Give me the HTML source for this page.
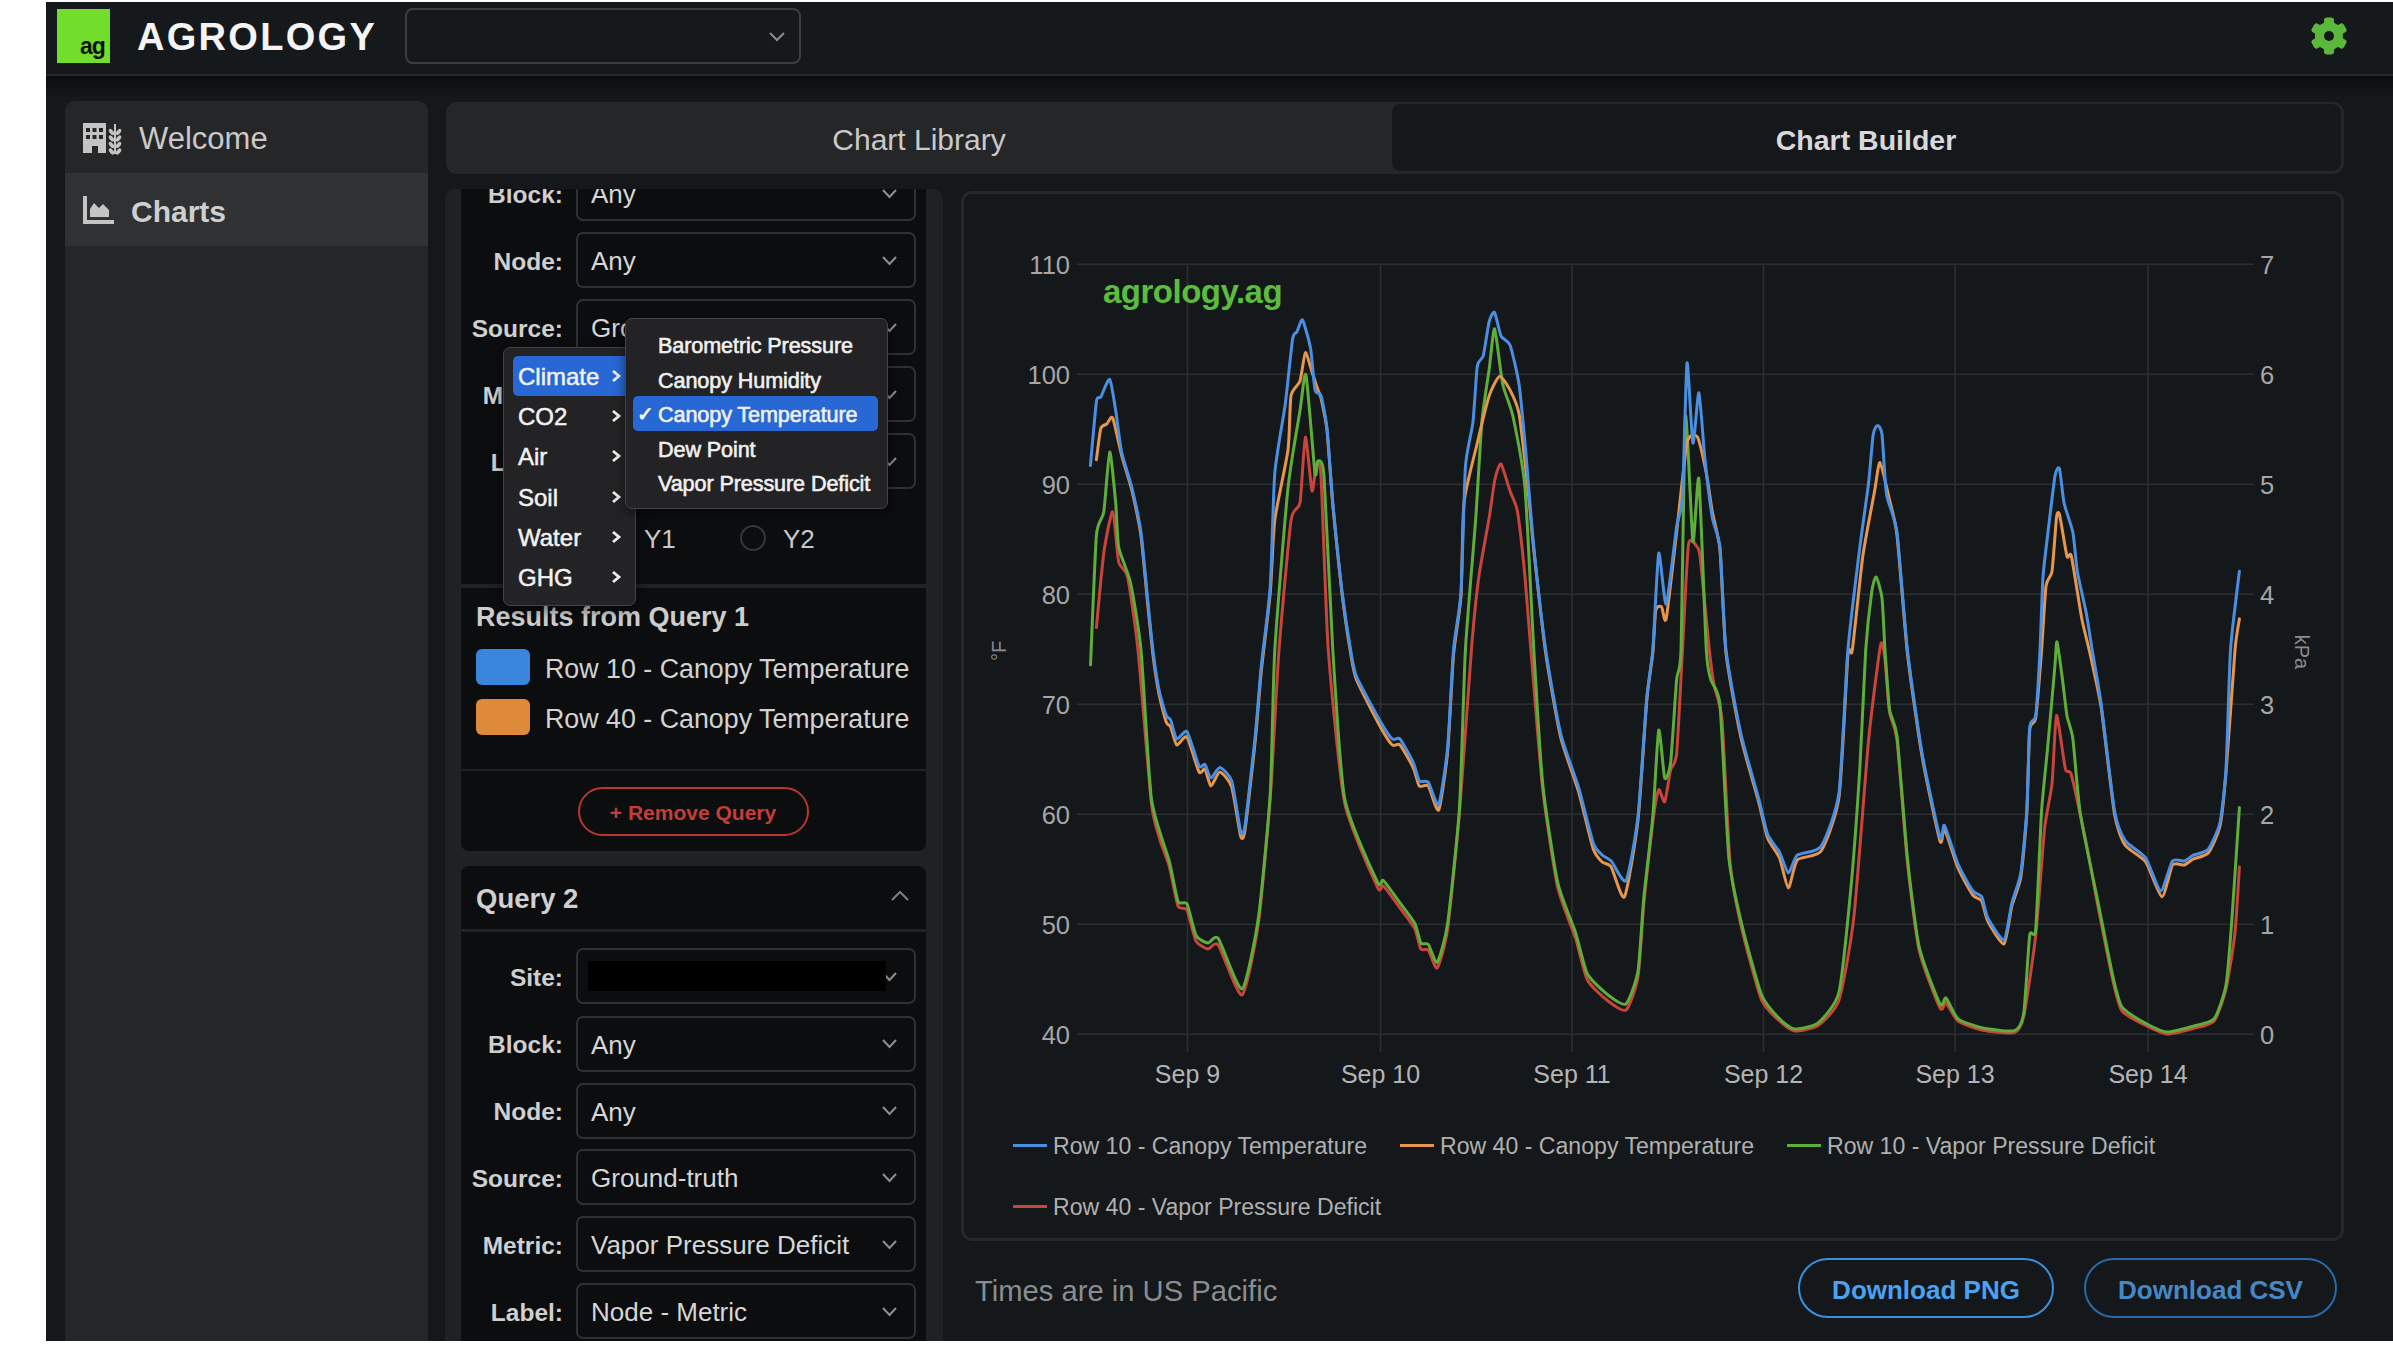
<!DOCTYPE html><html><head><meta charset="utf-8"><style>html,body{margin:0;padding:0;background:#fff;width:2393px;height:1345px;overflow:hidden;font-family:"Liberation Sans", sans-serif;}</style></head><body>
<div style="position:absolute;left:46px;top:2px;width:2347px;height:1339px;background:#15181b;overflow:hidden;"></div>
<div style="position:absolute;left:46px;top:2px;width:2347px;height:72px;background:#16191c;"></div>
<div style="position:absolute;left:46px;top:74px;width:2347px;height:2px;background:#26292c;"></div>
<div style="position:absolute;left:46px;top:76px;width:2347px;height:20px;background:linear-gradient(#0a0b0c,#15181b);"></div>
<div style="position:absolute;left:57px;top:9px;width:53px;height:54px;background:#72de2b;"></div>
<div style="position:absolute;left:80px;top:23px;height:46px;line-height:46px;font-size:23px;font-weight:700;color:#071204;white-space:nowrap;letter-spacing:-1px;">ag</div>
<div style="position:absolute;left:137px;top:-1px;height:76px;line-height:76px;font-size:38px;font-weight:700;color:#f4f4f4;white-space:nowrap;letter-spacing:2.3px;">AGROLOGY</div>
<div style="position:absolute;left:405px;top:8px;width:396px;height:56px;box-sizing:border-box;border:2px solid #3b3e41;border-radius:8px;"></div>
<svg style="position:absolute;left:768.0px;top:30.5px" width="18" height="11"><polyline points="2,2 9.0,9 16,2" fill="none" stroke="#8a8d90" stroke-width="2"/></svg>
<svg style="position:absolute;left:2309px;top:16px" width="40" height="40" viewBox="-20 -20 40 40"><rect x="-5" y="-18.5" width="10" height="9" rx="3" fill="#5cb83c" transform="rotate(0)"/><rect x="-5" y="-18.5" width="10" height="9" rx="3" fill="#5cb83c" transform="rotate(60)"/><rect x="-5" y="-18.5" width="10" height="9" rx="3" fill="#5cb83c" transform="rotate(120)"/><rect x="-5" y="-18.5" width="10" height="9" rx="3" fill="#5cb83c" transform="rotate(180)"/><rect x="-5" y="-18.5" width="10" height="9" rx="3" fill="#5cb83c" transform="rotate(240)"/><rect x="-5" y="-18.5" width="10" height="9" rx="3" fill="#5cb83c" transform="rotate(300)"/><circle r="14" fill="#5cb83c"/><circle r="5" fill="#16191c"/></svg>
<div style="position:absolute;left:65px;top:101px;width:363px;height:1240px;background:#252628;border-radius:10px 10px 0 0;"></div>
<div style="position:absolute;left:65px;top:173px;width:363px;height:73px;background:#303133;"></div>
<svg style="position:absolute;left:82px;top:121px" width="42" height="34" viewBox="0 0 42 34"><path d="M1 2 h23 v30 h-8 v-7 h-6 v7 h-9z" fill="#c4c4c4"/><rect x="4.0" y="7" width="4" height="4" fill="#252628"/><rect x="4.0" y="14" width="4" height="4" fill="#252628"/><rect x="10.5" y="7" width="4" height="4" fill="#252628"/><rect x="10.5" y="14" width="4" height="4" fill="#252628"/><rect x="17.0" y="7" width="4" height="4" fill="#252628"/><rect x="17.0" y="14" width="4" height="4" fill="#252628"/><rect x="32" y="3" width="2" height="30" fill="#c4c4c4"/><ellipse cx="29.5" cy="11.0" rx="1.9" ry="3.6" fill="#c4c4c4" transform="rotate(-40 29.5 11.0)"/><ellipse cx="36.5" cy="11.0" rx="1.9" ry="3.6" fill="#c4c4c4" transform="rotate(40 36.5 11.0)"/><ellipse cx="29.5" cy="17.5" rx="1.9" ry="3.6" fill="#c4c4c4" transform="rotate(-40 29.5 17.5)"/><ellipse cx="36.5" cy="17.5" rx="1.9" ry="3.6" fill="#c4c4c4" transform="rotate(40 36.5 17.5)"/><ellipse cx="29.5" cy="24.0" rx="1.9" ry="3.6" fill="#c4c4c4" transform="rotate(-40 29.5 24.0)"/><ellipse cx="36.5" cy="24.0" rx="1.9" ry="3.6" fill="#c4c4c4" transform="rotate(40 36.5 24.0)"/><ellipse cx="29.5" cy="30.5" rx="1.9" ry="3.6" fill="#c4c4c4" transform="rotate(-40 29.5 30.5)"/><ellipse cx="36.5" cy="30.5" rx="1.9" ry="3.6" fill="#c4c4c4" transform="rotate(40 36.5 30.5)"/></svg>
<div style="position:absolute;left:139px;top:108px;height:62px;line-height:62px;font-size:31px;font-weight:400;color:#c9c9c9;white-space:nowrap;">Welcome</div>
<svg style="position:absolute;left:82px;top:195px" width="34" height="30" viewBox="0 0 34 30"><path d="M1 1 h4 v24 h27 v4 h-31z" fill="#c4c4c4"/><path d="M8 22 v-8 l4 -6 l5 5 l4 -4 l6 6 v7z" fill="#c4c4c4"/></svg>
<div style="position:absolute;left:131px;top:181.5px;height:60px;line-height:60px;font-size:30px;font-weight:700;color:#cfcfcf;white-space:nowrap;">Charts</div>
<div style="position:absolute;left:446px;top:102px;width:1898px;height:72px;box-sizing:border-box;background:#252628;border:3px solid #24272a;border-radius:11px;"></div>
<div style="position:absolute;left:1390px;top:104px;width:951px;height:67px;box-sizing:border-box;background:#15181b;border-left:2px solid #25282b;border-radius:9px;"></div>
<div style="position:absolute;left:169px;width:1500px;text-align:center;top:110px;height:60px;line-height:60px;font-size:30px;font-weight:400;color:#c9c9c9;white-space:nowrap;">Chart Library</div>
<div style="position:absolute;left:1116px;width:1500px;text-align:center;top:111.5px;height:57.0px;line-height:57.0px;font-size:28.5px;font-weight:700;color:#d9d9d9;white-space:nowrap;">Chart Builder</div>
<div style="position:absolute;left:445px;top:189px;width:498px;height:1152px;overflow:hidden;border-radius:10px 10px 0 0;background:#1f2123;">
<div style="position:absolute;left:-445px;top:-189px;width:2393px;height:1345px;">
<div style="position:absolute;left:461px;top:150px;width:465px;height:434px;background:#0b0d0f;"></div>
<div style="position:absolute;left:461px;top:588px;width:465px;height:181px;background:#0b0d0f;"></div>
<div style="position:absolute;left:461px;top:771px;width:465px;height:80px;background:#0b0d0f;border-radius:0 0 8px 8px;"></div>
<div style="position:absolute;left:576px;top:165px;width:340px;height:56px;box-sizing:border-box;border:2px solid #2e3134;border-radius:7px;background:#0b0d0f;"></div>
<div style="position:absolute;left:591px;top:168.0px;height:52px;line-height:52px;font-size:26px;font-weight:400;color:#d6d6d6;white-space:nowrap;">Any</div>
<svg style="position:absolute;left:880.5px;top:187.5px" width="17" height="11"><polyline points="2,2 8.5,9 15,2" fill="none" stroke="#8c8f92" stroke-width="2"/></svg>
<div style="position:absolute;left:-937px;width:1500px;text-align:right;top:169.5px;height:49.0px;line-height:49.0px;font-size:24.5px;font-weight:700;color:#cfcfcf;white-space:nowrap;">Block:</div>
<div style="position:absolute;left:576px;top:232px;width:340px;height:56px;box-sizing:border-box;border:2px solid #2e3134;border-radius:7px;background:#0b0d0f;"></div>
<div style="position:absolute;left:591px;top:235.0px;height:52px;line-height:52px;font-size:26px;font-weight:400;color:#d6d6d6;white-space:nowrap;">Any</div>
<svg style="position:absolute;left:880.5px;top:254.5px" width="17" height="11"><polyline points="2,2 8.5,9 15,2" fill="none" stroke="#8c8f92" stroke-width="2"/></svg>
<div style="position:absolute;left:-937px;width:1500px;text-align:right;top:236.5px;height:49.0px;line-height:49.0px;font-size:24.5px;font-weight:700;color:#cfcfcf;white-space:nowrap;">Node:</div>
<div style="position:absolute;left:576px;top:299px;width:340px;height:56px;box-sizing:border-box;border:2px solid #2e3134;border-radius:7px;background:#0b0d0f;"></div>
<div style="position:absolute;left:591px;top:302.0px;height:52px;line-height:52px;font-size:26px;font-weight:400;color:#d6d6d6;white-space:nowrap;">Ground-truth</div>
<svg style="position:absolute;left:880.5px;top:321.5px" width="17" height="11"><polyline points="2,2 8.5,9 15,2" fill="none" stroke="#8c8f92" stroke-width="2"/></svg>
<div style="position:absolute;left:-937px;width:1500px;text-align:right;top:303.5px;height:49.0px;line-height:49.0px;font-size:24.5px;font-weight:700;color:#cfcfcf;white-space:nowrap;">Source:</div>
<div style="position:absolute;left:576px;top:366px;width:340px;height:56px;box-sizing:border-box;border:2px solid #2e3134;border-radius:7px;background:#0b0d0f;"></div>
<div style="position:absolute;left:591px;top:369.0px;height:52px;line-height:52px;font-size:26px;font-weight:400;color:#d6d6d6;white-space:nowrap;">Canopy Temperature</div>
<svg style="position:absolute;left:880.5px;top:388.5px" width="17" height="11"><polyline points="2,2 8.5,9 15,2" fill="none" stroke="#8c8f92" stroke-width="2"/></svg>
<div style="position:absolute;left:-937px;width:1500px;text-align:right;top:370.5px;height:49.0px;line-height:49.0px;font-size:24.5px;font-weight:700;color:#cfcfcf;white-space:nowrap;">Metric:</div>
<div style="position:absolute;left:576px;top:433px;width:340px;height:56px;box-sizing:border-box;border:2px solid #2e3134;border-radius:7px;background:#0b0d0f;"></div>
<div style="position:absolute;left:591px;top:436.0px;height:52px;line-height:52px;font-size:26px;font-weight:400;color:#d6d6d6;white-space:nowrap;">Node - Metric</div>
<svg style="position:absolute;left:880.5px;top:455.5px" width="17" height="11"><polyline points="2,2 8.5,9 15,2" fill="none" stroke="#8c8f92" stroke-width="2"/></svg>
<div style="position:absolute;left:-937px;width:1500px;text-align:right;top:437.5px;height:49.0px;line-height:49.0px;font-size:24.5px;font-weight:700;color:#cfcfcf;white-space:nowrap;">Label:</div>
<div style="position:absolute;left:596px;top:525px;width:22px;height:22px;border-radius:50%;box-sizing:border-box;border:2px solid #3a3d40;"></div>
<div style="position:absolute;left:644px;top:513px;height:52px;line-height:52px;font-size:26px;font-weight:400;color:#c9c9c9;white-space:nowrap;">Y1</div>
<div style="position:absolute;left:740px;top:525px;width:26px;height:26px;border-radius:50%;box-sizing:border-box;border:2px solid #34373a;"></div>
<div style="position:absolute;left:783px;top:513px;height:52px;line-height:52px;font-size:26px;font-weight:400;color:#c9c9c9;white-space:nowrap;">Y2</div>
<div style="position:absolute;left:476px;top:590px;height:54px;line-height:54px;font-size:27px;font-weight:700;color:#cdcdcd;white-space:nowrap;">Results from Query 1</div>
<div style="position:absolute;left:476px;top:649px;width:54px;height:36px;background:#3a85dd;border-radius:6px;"></div>
<div style="position:absolute;left:476px;top:699px;width:54px;height:36px;background:#df8a3b;border-radius:6px;"></div>
<div style="position:absolute;left:545px;top:642.7px;height:53.6px;line-height:53.6px;font-size:26.8px;font-weight:400;color:#d2d2d2;white-space:nowrap;">Row 10 - Canopy Temperature</div>
<div style="position:absolute;left:545px;top:692.7px;height:53.6px;line-height:53.6px;font-size:26.8px;font-weight:400;color:#d2d2d2;white-space:nowrap;">Row 40 - Canopy Temperature</div>
<div style="position:absolute;left:578px;top:787px;width:231px;height:49px;box-sizing:border-box;border:2px solid #b9362f;border-radius:25px;"></div>
<div style="position:absolute;left:-57px;width:1500px;text-align:center;top:791.5px;height:42px;line-height:42px;font-size:21px;font-weight:700;color:#c63d36;white-space:nowrap;">+ Remove Query</div>
<div style="position:absolute;left:461px;top:866px;width:465px;height:63px;background:#0b0d0f;border-radius:8px 8px 0 0;"></div>
<div style="position:absolute;left:461px;top:932px;width:465px;height:468px;background:#0b0d0f;"></div>
<div style="position:absolute;left:476px;top:871.0px;height:55.0px;line-height:55.0px;font-size:27.5px;font-weight:700;color:#d0d0d0;white-space:nowrap;">Query 2</div>
<svg style="position:absolute;left:890px;top:890px" width="20" height="12"><polyline points="2,10 10,2 18,10" fill="none" stroke="#7d8083" stroke-width="2"/></svg>
<div style="position:absolute;left:576px;top:948px;width:340px;height:56px;box-sizing:border-box;border:2px solid #2e3134;border-radius:7px;background:#0b0d0f;"></div>
<svg style="position:absolute;left:880.5px;top:970.5px" width="17" height="11"><polyline points="2,2 8.5,9 15,2" fill="none" stroke="#8c8f92" stroke-width="2"/></svg>
<div style="position:absolute;left:-937px;width:1500px;text-align:right;top:952.5px;height:49.0px;line-height:49.0px;font-size:24.5px;font-weight:700;color:#cfcfcf;white-space:nowrap;">Site:</div>
<div style="position:absolute;left:576px;top:1015.5px;width:340px;height:56.0px;box-sizing:border-box;border:2px solid #2e3134;border-radius:7px;background:#0b0d0f;"></div>
<div style="position:absolute;left:591px;top:1018.5px;height:52px;line-height:52px;font-size:26px;font-weight:400;color:#d6d6d6;white-space:nowrap;">Any</div>
<svg style="position:absolute;left:880.5px;top:1038.0px" width="17" height="11"><polyline points="2,2 8.5,9 15,2" fill="none" stroke="#8c8f92" stroke-width="2"/></svg>
<div style="position:absolute;left:-937px;width:1500px;text-align:right;top:1020.0px;height:49.0px;line-height:49.0px;font-size:24.5px;font-weight:700;color:#cfcfcf;white-space:nowrap;">Block:</div>
<div style="position:absolute;left:576px;top:1082.5px;width:340px;height:56.0px;box-sizing:border-box;border:2px solid #2e3134;border-radius:7px;background:#0b0d0f;"></div>
<div style="position:absolute;left:591px;top:1085.5px;height:52px;line-height:52px;font-size:26px;font-weight:400;color:#d6d6d6;white-space:nowrap;">Any</div>
<svg style="position:absolute;left:880.5px;top:1105.0px" width="17" height="11"><polyline points="2,2 8.5,9 15,2" fill="none" stroke="#8c8f92" stroke-width="2"/></svg>
<div style="position:absolute;left:-937px;width:1500px;text-align:right;top:1087.0px;height:49.0px;line-height:49.0px;font-size:24.5px;font-weight:700;color:#cfcfcf;white-space:nowrap;">Node:</div>
<div style="position:absolute;left:576px;top:1149px;width:340px;height:56px;box-sizing:border-box;border:2px solid #2e3134;border-radius:7px;background:#0b0d0f;"></div>
<div style="position:absolute;left:591px;top:1152.0px;height:52px;line-height:52px;font-size:26px;font-weight:400;color:#d6d6d6;white-space:nowrap;">Ground-truth</div>
<svg style="position:absolute;left:880.5px;top:1171.5px" width="17" height="11"><polyline points="2,2 8.5,9 15,2" fill="none" stroke="#8c8f92" stroke-width="2"/></svg>
<div style="position:absolute;left:-937px;width:1500px;text-align:right;top:1153.5px;height:49.0px;line-height:49.0px;font-size:24.5px;font-weight:700;color:#cfcfcf;white-space:nowrap;">Source:</div>
<div style="position:absolute;left:576px;top:1216px;width:340px;height:56px;box-sizing:border-box;border:2px solid #2e3134;border-radius:7px;background:#0b0d0f;"></div>
<div style="position:absolute;left:591px;top:1219.0px;height:52px;line-height:52px;font-size:26px;font-weight:400;color:#d6d6d6;white-space:nowrap;">Vapor Pressure Deficit</div>
<svg style="position:absolute;left:880.5px;top:1238.5px" width="17" height="11"><polyline points="2,2 8.5,9 15,2" fill="none" stroke="#8c8f92" stroke-width="2"/></svg>
<div style="position:absolute;left:-937px;width:1500px;text-align:right;top:1220.5px;height:49.0px;line-height:49.0px;font-size:24.5px;font-weight:700;color:#cfcfcf;white-space:nowrap;">Metric:</div>
<div style="position:absolute;left:576px;top:1283px;width:340px;height:56px;box-sizing:border-box;border:2px solid #2e3134;border-radius:7px;background:#0b0d0f;"></div>
<div style="position:absolute;left:591px;top:1286.0px;height:52px;line-height:52px;font-size:26px;font-weight:400;color:#d6d6d6;white-space:nowrap;">Node - Metric</div>
<svg style="position:absolute;left:880.5px;top:1305.5px" width="17" height="11"><polyline points="2,2 8.5,9 15,2" fill="none" stroke="#8c8f92" stroke-width="2"/></svg>
<div style="position:absolute;left:-937px;width:1500px;text-align:right;top:1287.5px;height:49.0px;line-height:49.0px;font-size:24.5px;font-weight:700;color:#cfcfcf;white-space:nowrap;">Label:</div>
<div style="position:absolute;left:588px;top:961px;width:298px;height:30px;background:#000;"></div>
</div></div>
<div style="position:absolute;left:503px;top:347px;width:133px;height:259px;box-sizing:border-box;background:#232325;border:1.5px solid #444446;border-radius:7px;box-shadow:0 4px 12px rgba(0,0,0,.5);"></div>
<div style="position:absolute;left:513px;top:356px;width:123px;height:40px;background:#2868d4;border-radius:5px 0 0 5px;"></div>
<div style="position:absolute;left:518px;top:353.0px;height:48px;line-height:48px;font-size:24px;font-weight:400;color:#f2f2f2;white-space:nowrap;-webkit-text-stroke:0.5px #f2f2f2;">Climate</div>
<svg style="position:absolute;left:610px;top:369.0px" width="12" height="14"><polyline points="3,2 9,7 3,12" fill="none" stroke="#eee" stroke-width="2.8"/></svg>
<div style="position:absolute;left:518px;top:393.2px;height:48px;line-height:48px;font-size:24px;font-weight:400;color:#f2f2f2;white-space:nowrap;-webkit-text-stroke:0.5px #f2f2f2;">CO2</div>
<svg style="position:absolute;left:610px;top:409.2px" width="12" height="14"><polyline points="3,2 9,7 3,12" fill="none" stroke="#eee" stroke-width="2.8"/></svg>
<div style="position:absolute;left:518px;top:433.4px;height:48px;line-height:48px;font-size:24px;font-weight:400;color:#f2f2f2;white-space:nowrap;-webkit-text-stroke:0.5px #f2f2f2;">Air</div>
<svg style="position:absolute;left:610px;top:449.4px" width="12" height="14"><polyline points="3,2 9,7 3,12" fill="none" stroke="#eee" stroke-width="2.8"/></svg>
<div style="position:absolute;left:518px;top:473.6px;height:48px;line-height:48px;font-size:24px;font-weight:400;color:#f2f2f2;white-space:nowrap;-webkit-text-stroke:0.5px #f2f2f2;">Soil</div>
<svg style="position:absolute;left:610px;top:489.6px" width="12" height="14"><polyline points="3,2 9,7 3,12" fill="none" stroke="#eee" stroke-width="2.8"/></svg>
<div style="position:absolute;left:518px;top:513.8px;height:48px;line-height:48px;font-size:24px;font-weight:400;color:#f2f2f2;white-space:nowrap;-webkit-text-stroke:0.5px #f2f2f2;">Water</div>
<svg style="position:absolute;left:610px;top:529.8px" width="12" height="14"><polyline points="3,2 9,7 3,12" fill="none" stroke="#eee" stroke-width="2.8"/></svg>
<div style="position:absolute;left:518px;top:554.0px;height:48px;line-height:48px;font-size:24px;font-weight:400;color:#f2f2f2;white-space:nowrap;-webkit-text-stroke:0.5px #f2f2f2;">GHG</div>
<svg style="position:absolute;left:610px;top:570.0px" width="12" height="14"><polyline points="3,2 9,7 3,12" fill="none" stroke="#eee" stroke-width="2.8"/></svg>
<div style="position:absolute;left:625px;top:318px;width:263px;height:191px;box-sizing:border-box;background:#232325;border:1.5px solid #444446;border-radius:7px;box-shadow:0 4px 12px rgba(0,0,0,.5);"></div>
<div style="position:absolute;left:633px;top:396px;width:245px;height:35px;background:#2868d4;border-radius:5px;"></div>
<div style="position:absolute;left:658px;top:323.9px;height:43.2px;line-height:43.2px;font-size:21.6px;font-weight:400;color:#f0f0f0;white-space:nowrap;-webkit-text-stroke:0.6px #f0f0f0;letter-spacing:-0.1px;">Barometric Pressure</div>
<div style="position:absolute;left:658px;top:358.5px;height:43.2px;line-height:43.2px;font-size:21.6px;font-weight:400;color:#f0f0f0;white-space:nowrap;-webkit-text-stroke:0.6px #f0f0f0;letter-spacing:-0.1px;">Canopy Humidity</div>
<div style="position:absolute;left:658px;top:393.09999999999997px;height:43.2px;line-height:43.2px;font-size:21.6px;font-weight:400;color:#f0f0f0;white-space:nowrap;-webkit-text-stroke:0.6px #f0f0f0;letter-spacing:-0.1px;">Canopy Temperature</div>
<div style="position:absolute;left:658px;top:427.7px;height:43.2px;line-height:43.2px;font-size:21.6px;font-weight:400;color:#f0f0f0;white-space:nowrap;-webkit-text-stroke:0.6px #f0f0f0;letter-spacing:-0.1px;">Dew Point</div>
<div style="position:absolute;left:658px;top:462.29999999999995px;height:43.2px;line-height:43.2px;font-size:21.6px;font-weight:400;color:#f0f0f0;white-space:nowrap;-webkit-text-stroke:0.6px #f0f0f0;letter-spacing:-0.1px;">Vapor Pressure Deficit</div>
<div style="position:absolute;left:637px;top:394px;height:40px;line-height:40px;font-size:20px;font-weight:700;color:#fff;white-space:nowrap;">&#10003;</div>
<div style="position:absolute;left:961px;top:191px;width:1383px;height:1050px;box-sizing:border-box;border:3px solid #24282b;border-radius:11px;"></div>
<svg style="position:absolute;left:0;top:0" width="2393" height="1345" viewBox="0 0 2393 1345"><line x1="1077" y1="264.3" x2="2254" y2="264.3" stroke="#2c2f32" stroke-width="1.6"/><line x1="1077" y1="374.3" x2="2254" y2="374.3" stroke="#2c2f32" stroke-width="1.6"/><line x1="1077" y1="484.3" x2="2254" y2="484.3" stroke="#2c2f32" stroke-width="1.6"/><line x1="1077" y1="594.3" x2="2254" y2="594.3" stroke="#2c2f32" stroke-width="1.6"/><line x1="1077" y1="704.3" x2="2254" y2="704.3" stroke="#2c2f32" stroke-width="1.6"/><line x1="1077" y1="814.3" x2="2254" y2="814.3" stroke="#2c2f32" stroke-width="1.6"/><line x1="1077" y1="924.3" x2="2254" y2="924.3" stroke="#2c2f32" stroke-width="1.6"/><line x1="1077" y1="1034.3" x2="2254" y2="1034.3" stroke="#2c2f32" stroke-width="1.6"/><line x1="1187.5" y1="264" x2="1187.5" y2="1052" stroke="#2c2f32" stroke-width="1.6"/><line x1="1380.5" y1="264" x2="1380.5" y2="1052" stroke="#2c2f32" stroke-width="1.6"/><line x1="1572" y1="264" x2="1572" y2="1052" stroke="#2c2f32" stroke-width="1.6"/><line x1="1763.5" y1="264" x2="1763.5" y2="1052" stroke="#2c2f32" stroke-width="1.6"/><line x1="1955" y1="264" x2="1955" y2="1052" stroke="#2c2f32" stroke-width="1.6"/><line x1="2148" y1="264" x2="2148" y2="1052" stroke="#2c2f32" stroke-width="1.6"/></svg>
<div style="position:absolute;left:-430px;width:1500px;text-align:right;top:239.8px;height:51.0px;line-height:51.0px;font-size:25.5px;font-weight:400;color:#a6a6a6;white-space:nowrap;">110</div>
<div style="position:absolute;left:2260px;top:239.8px;height:51.0px;line-height:51.0px;font-size:25.5px;font-weight:400;color:#a6a6a6;white-space:nowrap;">7</div>
<div style="position:absolute;left:-430px;width:1500px;text-align:right;top:349.8px;height:51.0px;line-height:51.0px;font-size:25.5px;font-weight:400;color:#a6a6a6;white-space:nowrap;">100</div>
<div style="position:absolute;left:2260px;top:349.8px;height:51.0px;line-height:51.0px;font-size:25.5px;font-weight:400;color:#a6a6a6;white-space:nowrap;">6</div>
<div style="position:absolute;left:-430px;width:1500px;text-align:right;top:459.8px;height:51.0px;line-height:51.0px;font-size:25.5px;font-weight:400;color:#a6a6a6;white-space:nowrap;">90</div>
<div style="position:absolute;left:2260px;top:459.8px;height:51.0px;line-height:51.0px;font-size:25.5px;font-weight:400;color:#a6a6a6;white-space:nowrap;">5</div>
<div style="position:absolute;left:-430px;width:1500px;text-align:right;top:569.8px;height:51.0px;line-height:51.0px;font-size:25.5px;font-weight:400;color:#a6a6a6;white-space:nowrap;">80</div>
<div style="position:absolute;left:2260px;top:569.8px;height:51.0px;line-height:51.0px;font-size:25.5px;font-weight:400;color:#a6a6a6;white-space:nowrap;">4</div>
<div style="position:absolute;left:-430px;width:1500px;text-align:right;top:679.8px;height:51.0px;line-height:51.0px;font-size:25.5px;font-weight:400;color:#a6a6a6;white-space:nowrap;">70</div>
<div style="position:absolute;left:2260px;top:679.8px;height:51.0px;line-height:51.0px;font-size:25.5px;font-weight:400;color:#a6a6a6;white-space:nowrap;">3</div>
<div style="position:absolute;left:-430px;width:1500px;text-align:right;top:789.8px;height:51.0px;line-height:51.0px;font-size:25.5px;font-weight:400;color:#a6a6a6;white-space:nowrap;">60</div>
<div style="position:absolute;left:2260px;top:789.8px;height:51.0px;line-height:51.0px;font-size:25.5px;font-weight:400;color:#a6a6a6;white-space:nowrap;">2</div>
<div style="position:absolute;left:-430px;width:1500px;text-align:right;top:899.8px;height:51.0px;line-height:51.0px;font-size:25.5px;font-weight:400;color:#a6a6a6;white-space:nowrap;">50</div>
<div style="position:absolute;left:2260px;top:899.8px;height:51.0px;line-height:51.0px;font-size:25.5px;font-weight:400;color:#a6a6a6;white-space:nowrap;">1</div>
<div style="position:absolute;left:-430px;width:1500px;text-align:right;top:1009.8px;height:51.0px;line-height:51.0px;font-size:25.5px;font-weight:400;color:#a6a6a6;white-space:nowrap;">40</div>
<div style="position:absolute;left:2260px;top:1009.8px;height:51.0px;line-height:51.0px;font-size:25.5px;font-weight:400;color:#a6a6a6;white-space:nowrap;">0</div>
<div style="position:absolute;left:437.5px;width:1500px;text-align:center;top:1049px;height:50px;line-height:50px;font-size:25px;font-weight:400;color:#b4b4b4;white-space:nowrap;">Sep 9</div>
<div style="position:absolute;left:630.5px;width:1500px;text-align:center;top:1049px;height:50px;line-height:50px;font-size:25px;font-weight:400;color:#b4b4b4;white-space:nowrap;">Sep 10</div>
<div style="position:absolute;left:822px;width:1500px;text-align:center;top:1049px;height:50px;line-height:50px;font-size:25px;font-weight:400;color:#b4b4b4;white-space:nowrap;">Sep 11</div>
<div style="position:absolute;left:1013.5px;width:1500px;text-align:center;top:1049px;height:50px;line-height:50px;font-size:25px;font-weight:400;color:#b4b4b4;white-space:nowrap;">Sep 12</div>
<div style="position:absolute;left:1205px;width:1500px;text-align:center;top:1049px;height:50px;line-height:50px;font-size:25px;font-weight:400;color:#b4b4b4;white-space:nowrap;">Sep 13</div>
<div style="position:absolute;left:1398px;width:1500px;text-align:center;top:1049px;height:50px;line-height:50px;font-size:25px;font-weight:400;color:#b4b4b4;white-space:nowrap;">Sep 14</div>
<div style="position:absolute;left:249px;width:1500px;text-align:center;top:631px;height:40px;line-height:40px;font-size:20px;font-weight:400;color:#8c8c8c;white-space:nowrap;transform:rotate(-90deg);">&deg;F</div>
<div style="position:absolute;left:1552px;width:1500px;text-align:center;top:632px;height:40px;line-height:40px;font-size:20px;font-weight:400;color:#8c8c8c;white-space:nowrap;transform:rotate(90deg);">kPa</div>
<div style="position:absolute;left:1103px;top:259px;height:66px;line-height:66px;font-size:33px;font-weight:700;color:#5cbd3c;white-space:nowrap;letter-spacing:-0.5px;">agrology.ag</div>
<svg style="position:absolute;left:0;top:0" width="2393" height="1345" viewBox="0 0 2393 1345"><path d="M1096.4,627.7 C1097.1,620.2 1102.2,564.6 1103.8,553.0 C1105.4,541.4 1111.2,510.8 1112.7,511.7 C1114.2,512.6 1117.2,555.5 1118.7,562.0 C1120.2,568.5 1125.7,568.2 1127.6,577.0 C1129.5,585.8 1135.6,627.4 1138.0,650.0 C1140.4,672.6 1149.2,784.0 1151.4,803.0 C1153.6,822.0 1158.2,833.7 1160.0,840.0 C1161.8,846.3 1167.4,859.4 1169.2,866.0 C1171.0,872.6 1176.2,901.6 1178.0,906.0 C1179.8,910.4 1185.2,906.5 1187.0,910.0 C1188.8,913.5 1193.9,937.1 1196.0,941.0 C1198.1,944.9 1205.7,948.6 1207.9,949.0 C1210.1,949.4 1214.9,940.4 1218.3,945.0 C1221.7,949.6 1238.0,997.2 1242.0,995.0 C1246.0,992.8 1255.6,942.8 1258.4,923.0 C1261.2,903.2 1268.2,824.3 1270.3,797.0 C1272.4,769.7 1276.9,677.6 1279.0,650.0 C1281.1,622.4 1288.9,535.3 1291.0,520.6 C1293.1,505.9 1298.6,511.2 1300.0,502.8 C1301.4,494.4 1304.2,438.2 1305.4,437.0 C1306.6,435.8 1310.9,488.3 1312.0,491.0 C1313.1,493.7 1315.5,465.5 1316.4,464.0 C1317.3,462.5 1319.8,457.4 1321.0,476.0 C1322.2,494.6 1325.9,617.3 1328.3,650.0 C1330.7,682.7 1339.8,779.3 1344.7,803.0 C1349.6,826.7 1373.5,878.7 1377.4,887.0 C1381.3,895.3 1381.1,883.9 1383.4,886.0 C1385.7,888.1 1396.8,903.7 1400.0,908.0 C1403.2,912.3 1412.8,924.9 1414.9,929.0 C1417.0,933.1 1419.5,946.9 1420.8,949.0 C1422.1,951.1 1426.7,948.1 1428.3,950.0 C1429.9,951.9 1435.3,970.1 1437.2,968.0 C1439.1,965.9 1445.4,944.6 1447.6,929.0 C1449.8,913.4 1457.1,839.9 1459.5,812.0 C1461.9,784.1 1469.5,673.5 1471.4,650.0 C1473.3,626.5 1477.0,590.2 1478.8,577.0 C1480.6,563.8 1487.6,527.4 1489.2,517.6 C1490.8,507.8 1493.8,484.4 1495.0,479.0 C1496.2,473.6 1499.5,462.8 1501.0,464.0 C1502.5,465.2 1508.3,486.2 1510.0,491.0 C1511.7,495.8 1516.0,503.1 1517.5,511.7 C1519.0,520.3 1523.7,563.2 1525.0,577.0 C1526.3,590.8 1529.1,628.8 1530.9,650.0 C1532.7,671.2 1540.0,765.3 1542.7,789.0 C1545.4,812.7 1554.3,872.1 1557.6,887.0 C1560.9,901.9 1572.5,928.7 1575.5,938.0 C1578.5,947.3 1584.2,973.7 1587.4,980.0 C1590.7,986.3 1604.1,998.0 1608.0,1001.0 C1611.9,1004.0 1623.0,1012.4 1626.0,1010.0 C1629.0,1007.6 1636.2,987.8 1638.0,977.0 C1639.8,966.2 1642.4,917.5 1643.9,902.0 C1645.4,886.5 1651.3,833.2 1652.8,822.0 C1654.3,810.8 1657.5,791.8 1658.7,789.8 C1659.9,787.8 1663.5,803.7 1664.7,801.7 C1665.9,799.7 1669.4,774.8 1670.6,770.0 C1671.8,765.2 1675.4,766.0 1676.6,754.0 C1677.8,742.0 1681.3,671.0 1682.5,650.0 C1683.7,629.0 1687.0,554.7 1688.5,544.4 C1690.0,534.1 1696.2,545.9 1697.4,547.4 C1698.6,548.9 1699.2,548.7 1700.4,559.0 C1701.6,569.3 1707.9,637.4 1709.3,650.0 C1710.7,662.6 1712.7,678.0 1714.0,685.0 C1715.3,692.0 1720.4,702.3 1722.0,720.0 C1723.6,737.7 1728.0,840.9 1730.0,862.0 C1732.0,883.1 1739.1,917.2 1742.3,931.0 C1745.5,944.8 1757.9,991.0 1761.6,1000.0 C1765.3,1009.0 1776.2,1017.9 1779.5,1021.0 C1782.8,1024.1 1790.6,1030.5 1794.4,1031.0 C1798.2,1031.5 1813.5,1028.6 1818.0,1025.5 C1822.5,1022.4 1835.4,1010.8 1839.0,1000.0 C1842.6,989.2 1850.8,943.8 1853.8,917.7 C1856.8,891.6 1866.0,766.3 1868.7,739.0 C1871.4,711.7 1879.0,652.9 1880.6,645.0 C1882.2,637.1 1884.1,653.3 1885.0,660.0 C1885.9,666.7 1888.3,704.0 1889.5,712.0 C1890.7,720.0 1895.2,725.0 1897.0,740.0 C1898.8,755.0 1905.2,840.9 1907.4,862.0 C1909.6,883.1 1916.0,936.4 1919.3,951.0 C1922.6,965.6 1937.3,1002.8 1940.0,1008.0 C1942.7,1013.2 1944.2,1001.7 1946.0,1003.0 C1947.8,1004.3 1954.4,1018.3 1958.0,1021.0 C1961.6,1023.7 1976.1,1028.8 1981.7,1030.0 C1987.3,1031.2 2010.2,1033.9 2014.4,1032.5 C2018.6,1031.1 2021.7,1025.7 2023.8,1016.0 C2025.9,1006.3 2033.6,954.3 2035.7,935.5 C2037.8,916.7 2043.0,843.6 2044.6,828.4 C2046.2,813.2 2050.8,795.1 2052.0,783.8 C2053.2,772.5 2055.2,716.9 2056.5,715.4 C2057.8,713.9 2063.9,763.0 2065.4,769.0 C2066.9,775.0 2069.3,767.6 2071.4,775.0 C2073.5,782.4 2083.5,830.1 2086.2,843.3 C2088.9,856.5 2095.4,893.2 2098.1,907.0 C2100.8,920.8 2110.6,970.6 2113.0,981.0 C2115.4,991.4 2118.9,1006.7 2121.9,1011.0 C2124.9,1015.3 2138.3,1021.7 2142.8,1024.0 C2147.3,1026.3 2161.4,1033.5 2166.5,1034.0 C2171.6,1034.5 2188.5,1029.8 2193.3,1028.5 C2198.1,1027.2 2210.8,1025.0 2214.1,1021.0 C2217.4,1017.0 2223.9,997.9 2226.0,989.0 C2228.1,980.1 2233.7,944.7 2235.0,932.5 C2236.3,920.3 2239.0,873.5 2239.4,867.0" fill="none" stroke="#c9443a" stroke-width="3" stroke-linejoin="round" stroke-linecap="round"/><path d="M1090.5,665.0 C1091.1,652.0 1095.1,550.8 1096.4,535.5 C1097.7,520.2 1102.5,520.0 1103.8,511.7 C1105.1,503.3 1108.5,452.9 1109.7,452.0 C1110.9,451.1 1114.8,493.3 1115.7,502.8 C1116.6,512.3 1117.2,539.4 1118.7,547.4 C1120.2,555.4 1128.4,572.7 1130.6,583.0 C1132.8,593.3 1138.9,628.4 1141.0,650.0 C1143.1,671.6 1148.6,777.6 1151.4,798.7 C1154.2,819.8 1166.5,850.7 1169.2,861.0 C1171.9,871.3 1176.2,897.0 1178.0,901.3 C1179.8,905.6 1185.2,900.6 1187.0,904.0 C1188.8,907.4 1193.9,931.6 1196.0,935.5 C1198.1,939.4 1205.7,942.7 1207.9,943.0 C1210.1,943.3 1214.9,933.9 1218.3,938.5 C1221.7,943.1 1238.0,991.1 1242.0,989.0 C1246.0,986.9 1255.6,937.3 1258.4,917.7 C1261.2,898.1 1268.7,819.5 1270.3,792.7 C1271.9,765.9 1273.0,680.5 1274.8,650.0 C1276.6,619.5 1285.5,511.9 1288.0,488.0 C1290.5,464.1 1298.2,421.9 1300.0,410.6 C1301.8,399.3 1304.5,368.8 1306.0,375.0 C1307.5,381.2 1313.8,464.4 1315.0,473.0 C1316.2,481.6 1317.1,460.7 1318.0,461.0 C1318.9,461.3 1322.5,457.1 1324.0,476.0 C1325.5,494.9 1330.7,617.7 1332.8,650.0 C1334.9,682.3 1340.2,775.5 1344.7,798.7 C1349.2,821.9 1373.5,873.8 1377.4,882.0 C1381.3,890.2 1381.1,878.4 1383.4,880.5 C1385.7,882.6 1396.8,898.5 1400.0,902.8 C1403.2,907.1 1412.8,919.6 1414.9,923.6 C1417.0,927.6 1419.5,940.9 1420.8,943.0 C1422.1,945.1 1426.7,942.5 1428.3,944.4 C1429.9,946.3 1435.3,964.4 1437.2,962.3 C1439.1,960.2 1445.4,939.1 1447.6,923.6 C1449.8,908.1 1457.7,835.0 1459.5,807.6 C1461.3,780.2 1463.8,679.0 1465.4,650.0 C1467.0,621.0 1474.2,540.4 1475.8,517.6 C1477.4,494.9 1480.5,437.4 1481.8,422.5 C1483.1,407.6 1487.9,378.4 1489.2,369.0 C1490.5,359.6 1493.3,327.3 1494.6,328.8 C1495.9,330.3 1500.8,375.0 1502.6,383.8 C1504.4,392.6 1510.8,406.1 1513.0,416.5 C1515.2,426.9 1522.9,464.6 1525.0,488.0 C1527.1,511.4 1532.0,620.4 1533.8,650.0 C1535.6,679.6 1540.3,760.6 1542.7,783.8 C1545.1,807.0 1554.3,867.1 1557.6,882.0 C1560.9,896.9 1572.5,923.3 1575.5,932.5 C1578.5,941.7 1584.2,967.8 1587.4,974.0 C1590.7,980.2 1604.1,992.0 1608.0,995.0 C1611.9,998.0 1623.0,1006.4 1626.0,1004.0 C1629.0,1001.6 1636.2,981.7 1638.0,971.0 C1639.8,960.3 1642.4,912.2 1643.9,896.8 C1645.4,881.3 1651.3,833.1 1652.8,816.5 C1654.3,799.9 1657.5,734.2 1658.7,730.3 C1659.9,726.4 1663.5,774.6 1664.7,777.9 C1665.9,781.2 1669.4,772.8 1670.6,763.0 C1671.8,753.2 1675.6,691.0 1676.6,679.7 C1677.6,668.4 1680.1,676.3 1681.0,650.0 C1681.9,623.7 1684.3,427.4 1685.5,416.5 C1686.7,405.6 1691.6,535.2 1692.9,541.5 C1694.2,547.8 1697.6,468.1 1698.9,479.0 C1700.2,489.9 1705.1,629.9 1706.3,650.0 C1707.5,670.1 1709.4,674.2 1710.8,679.7 C1712.2,685.2 1718.2,687.2 1720.0,705.0 C1721.8,722.8 1726.7,835.8 1728.9,858.0 C1731.1,880.2 1739.0,912.9 1742.3,926.6 C1745.6,940.3 1757.9,985.8 1761.6,995.0 C1765.3,1004.2 1776.2,1015.4 1779.5,1018.8 C1782.8,1022.2 1790.6,1028.6 1794.4,1029.0 C1798.2,1029.4 1813.5,1026.7 1818.0,1023.0 C1822.5,1019.3 1835.7,1005.5 1839.0,992.0 C1842.3,978.5 1848.8,910.3 1850.9,888.0 C1853.0,865.7 1858.3,792.8 1859.8,769.0 C1861.3,745.2 1864.5,667.7 1865.7,650.0 C1866.9,632.3 1870.7,599.3 1871.7,592.0 C1872.7,584.7 1875.1,576.4 1876.1,577.0 C1877.1,577.6 1881.1,590.7 1882.0,598.0 C1882.9,605.3 1884.2,638.9 1885.0,650.0 C1885.8,661.1 1888.3,700.9 1889.5,709.5 C1890.7,718.1 1895.2,721.4 1897.0,736.3 C1898.8,751.1 1905.2,836.9 1907.4,858.0 C1909.6,879.1 1916.0,932.8 1919.3,947.4 C1922.6,962.0 1937.3,998.9 1940.0,1004.0 C1942.7,1009.1 1944.2,996.5 1946.0,998.0 C1947.8,999.5 1954.4,1015.8 1958.0,1018.8 C1961.6,1021.8 1976.1,1026.5 1981.7,1027.7 C1987.3,1028.9 2010.2,1032.2 2014.4,1030.7 C2018.6,1029.2 2022.3,1022.3 2023.8,1012.8 C2025.3,1003.3 2028.5,943.8 2029.7,935.5 C2030.9,927.2 2034.5,942.0 2035.7,929.5 C2036.9,917.0 2040.4,828.8 2041.6,810.6 C2042.8,792.5 2046.3,762.6 2047.6,748.0 C2048.9,733.4 2054.1,675.5 2055.0,664.9 C2055.9,654.3 2056.2,640.5 2057.0,642.0 C2057.8,643.5 2061.5,672.4 2062.5,679.7 C2063.5,687.0 2065.9,709.5 2066.9,715.4 C2067.9,721.3 2071.6,729.2 2072.9,739.0 C2074.2,748.8 2077.8,797.2 2080.3,813.6 C2082.8,830.0 2094.8,886.5 2098.1,902.8 C2101.4,919.1 2110.6,966.6 2113.0,977.0 C2115.4,987.4 2118.9,1002.4 2121.9,1006.9 C2124.9,1011.4 2138.3,1019.3 2142.8,1021.8 C2147.3,1024.3 2161.4,1031.6 2166.5,1032.0 C2171.6,1032.4 2188.5,1027.5 2193.3,1026.2 C2198.1,1024.9 2210.8,1022.9 2214.1,1018.8 C2217.4,1014.7 2224.2,995.1 2226.0,985.0 C2227.8,974.9 2230.7,935.4 2232.0,917.7 C2233.3,900.0 2238.7,818.6 2239.4,807.6" fill="none" stroke="#5fae3a" stroke-width="3" stroke-linejoin="round" stroke-linecap="round"/><path d="M1096.4,459.7 C1096.8,456.6 1099.8,432.0 1100.8,428.4 C1101.8,424.8 1105.6,425.0 1106.8,424.0 C1108.0,423.0 1111.2,414.9 1112.7,418.0 C1114.2,421.1 1119.7,447.7 1121.6,455.0 C1123.5,462.3 1130.1,482.9 1132.0,491.0 C1133.9,499.1 1139.4,524.0 1141.0,536.0 C1142.6,548.0 1147.2,599.2 1148.4,611.0 C1149.6,622.8 1151.9,645.8 1152.9,654.0 C1153.9,662.2 1157.5,686.2 1158.8,693.0 C1160.1,699.8 1165.0,718.6 1166.2,722.0 C1167.4,725.4 1169.7,724.7 1170.7,727.0 C1171.8,729.3 1175.1,744.0 1176.7,745.0 C1178.3,746.0 1184.8,734.3 1187.0,737.0 C1189.2,739.7 1197.2,768.8 1199.0,772.0 C1200.8,775.2 1203.8,767.6 1205.0,769.0 C1206.2,770.4 1209.4,785.7 1210.9,786.0 C1212.4,786.3 1217.7,771.9 1219.8,772.0 C1221.9,772.1 1229.6,780.6 1231.7,787.0 C1233.8,793.4 1239.3,831.7 1240.6,836.0 C1241.9,840.3 1243.5,839.8 1245.0,830.0 C1246.5,820.2 1253.9,754.0 1255.5,738.0 C1257.1,722.0 1259.9,684.6 1261.4,670.0 C1262.9,655.4 1269.0,607.0 1270.3,592.0 C1271.6,577.0 1273.0,534.2 1274.8,520.0 C1276.6,505.8 1286.4,462.4 1288.0,450.0 C1289.6,437.6 1289.8,402.6 1291.0,395.7 C1292.2,388.8 1298.6,385.3 1300.0,381.0 C1301.4,376.7 1304.2,353.5 1305.4,352.6 C1306.6,351.7 1310.7,368.3 1312.0,372.0 C1313.3,375.7 1317.1,387.4 1318.0,390.0 C1318.9,392.6 1320.1,394.0 1321.0,398.0 C1321.9,402.0 1325.8,419.3 1327.0,430.0 C1328.2,440.7 1331.3,488.9 1332.8,505.0 C1334.3,521.1 1339.9,576.2 1341.7,591.0 C1343.5,605.8 1349.1,644.1 1350.6,653.0 C1352.1,661.9 1353.6,672.6 1356.6,680.0 C1359.6,687.4 1376.8,720.5 1380.4,727.0 C1384.0,733.5 1390.3,743.2 1392.3,745.0 C1394.3,746.8 1397.9,742.7 1400.0,745.0 C1402.1,747.3 1411.5,763.9 1413.4,768.0 C1415.3,772.1 1417.8,784.2 1419.3,786.0 C1420.8,787.8 1426.4,783.6 1428.3,786.0 C1430.2,788.4 1436.8,813.4 1438.7,810.0 C1440.6,806.6 1446.1,767.5 1447.6,752.0 C1449.1,736.5 1452.2,670.6 1453.5,655.0 C1454.8,639.4 1460.0,611.2 1461.0,596.0 C1462.0,580.8 1462.4,518.1 1464.0,502.8 C1465.6,487.5 1474.8,453.7 1477.3,443.0 C1479.8,432.3 1487.0,402.4 1489.2,395.7 C1491.4,389.0 1497.5,377.0 1499.6,376.4 C1501.7,375.8 1508.1,386.3 1510.0,390.0 C1511.9,393.7 1517.2,403.8 1519.0,413.6 C1520.8,423.4 1526.4,474.4 1527.9,488.0 C1529.4,501.6 1532.0,533.5 1533.8,550.0 C1535.6,566.5 1543.0,634.3 1545.7,653.0 C1548.4,671.7 1557.3,723.2 1560.6,737.0 C1563.9,750.8 1575.1,779.8 1578.4,791.0 C1581.7,802.2 1590.9,841.9 1593.3,849.0 C1595.7,856.1 1600.4,860.2 1602.2,862.0 C1604.0,863.8 1609.0,863.5 1611.2,867.0 C1613.4,870.5 1621.8,901.5 1624.5,896.8 C1627.2,892.1 1635.8,839.7 1638.0,820.0 C1640.2,800.3 1645.3,716.7 1646.8,700.0 C1648.3,683.3 1651.9,662.0 1652.8,653.0 C1653.7,644.0 1654.9,614.6 1655.8,610.0 C1656.7,605.4 1660.7,606.1 1661.7,607.0 C1662.7,607.9 1664.7,626.2 1666.2,618.8 C1667.7,611.3 1674.5,550.1 1676.6,532.5 C1678.7,514.9 1684.9,452.6 1687.0,443.0 C1689.1,433.4 1695.5,434.0 1697.4,437.0 C1699.3,440.0 1704.8,465.5 1706.3,473.0 C1707.8,480.5 1710.9,504.0 1712.3,511.7 C1713.7,519.4 1718.6,535.9 1720.0,550.0 C1721.4,564.1 1723.9,634.3 1726.0,653.0 C1728.1,671.7 1737.5,722.1 1740.8,737.0 C1744.1,751.9 1756.0,791.9 1758.7,802.0 C1761.4,812.1 1765.5,832.4 1767.6,838.0 C1769.7,843.6 1777.4,853.0 1779.5,858.0 C1781.6,863.0 1786.6,887.8 1788.4,888.0 C1790.2,888.2 1794.0,863.7 1797.3,860.0 C1800.6,856.3 1816.9,857.3 1821.1,851.0 C1825.3,844.7 1836.3,816.6 1839.0,797.0 C1841.7,777.4 1846.6,669.7 1847.9,655.0 C1849.2,640.3 1850.8,659.9 1852.3,650.0 C1853.8,640.1 1860.6,572.2 1862.8,556.3 C1865.0,540.4 1872.9,500.4 1874.6,491.0 C1876.3,481.6 1878.5,461.7 1880.0,462.6 C1881.5,463.5 1887.8,492.6 1889.5,499.8 C1891.2,507.0 1895.2,519.7 1897.0,535.0 C1898.8,550.3 1904.9,630.8 1907.4,653.0 C1909.9,675.2 1918.9,738.2 1922.2,757.0 C1925.5,775.8 1937.8,833.8 1940.0,841.0 C1942.2,848.2 1942.7,826.3 1944.5,829.0 C1946.3,831.7 1955.2,861.4 1958.0,868.0 C1960.8,874.6 1970.4,891.7 1972.8,895.0 C1975.2,898.3 1980.2,898.4 1981.7,901.0 C1983.2,903.6 1985.5,916.7 1987.7,921.0 C1989.9,925.3 2001.6,945.5 2004.0,944.0 C2006.4,942.5 2010.2,912.7 2011.9,906.0 C2013.6,899.3 2019.3,886.2 2020.8,877.0 C2022.3,867.8 2025.9,828.7 2026.8,814.0 C2027.7,799.3 2028.8,739.6 2029.7,730.0 C2030.6,720.4 2034.5,726.0 2035.7,718.0 C2036.9,710.0 2040.6,663.2 2041.6,650.0 C2042.6,636.8 2045.0,593.9 2046.0,586.0 C2047.0,578.1 2050.9,578.0 2052.0,571.2 C2053.1,564.4 2055.8,523.2 2056.5,517.6 C2057.2,512.0 2058.4,510.8 2059.5,514.7 C2060.6,518.6 2065.8,552.1 2067.0,556.3 C2068.2,560.5 2069.9,550.0 2071.4,556.3 C2072.9,562.5 2080.0,609.4 2081.8,618.8 C2083.6,628.2 2087.3,641.2 2089.2,650.0 C2091.1,658.8 2098.6,690.6 2101.1,707.0 C2103.6,723.4 2112.1,800.2 2114.5,814.0 C2116.9,827.8 2121.9,840.2 2125.0,845.0 C2128.1,849.8 2142.0,856.8 2145.7,862.0 C2149.4,867.2 2159.3,896.5 2162.0,896.8 C2164.7,897.1 2170.3,868.2 2172.5,865.0 C2174.7,861.8 2182.3,865.6 2184.4,865.0 C2186.5,864.4 2190.9,860.2 2193.3,859.0 C2195.7,857.8 2205.5,856.3 2208.2,853.0 C2210.9,849.7 2218.2,834.0 2220.0,826.0 C2221.8,818.0 2224.5,790.6 2226.0,773.0 C2227.5,755.4 2233.7,665.4 2235.0,650.0 C2236.3,634.6 2239.0,621.9 2239.4,618.8" fill="none" stroke="#e8964c" stroke-width="3" stroke-linejoin="round" stroke-linecap="round"/><path d="M1090.4,465.6 C1091.0,459.2 1095.4,408.6 1096.4,401.7 C1097.4,394.8 1099.5,399.2 1100.8,397.0 C1102.1,394.8 1108.2,378.0 1109.7,379.4 C1111.2,380.8 1114.5,403.3 1115.7,410.6 C1116.9,417.9 1120.0,444.3 1121.6,452.0 C1123.2,459.7 1130.1,479.9 1132.0,488.0 C1133.9,496.1 1139.4,520.6 1141.0,532.5 C1142.6,544.4 1147.2,595.2 1148.4,607.0 C1149.6,618.8 1151.9,641.8 1152.9,650.0 C1153.9,658.2 1157.5,682.2 1158.8,688.7 C1160.1,695.2 1165.0,712.3 1166.2,715.4 C1167.4,718.5 1169.7,717.6 1170.7,720.0 C1171.8,722.4 1175.1,737.8 1176.7,739.0 C1178.3,740.2 1184.8,729.1 1187.0,731.8 C1189.2,734.5 1197.2,762.7 1199.0,766.0 C1200.8,769.3 1203.8,763.3 1205.0,764.5 C1206.2,765.7 1209.4,777.7 1210.9,778.0 C1212.4,778.3 1217.7,767.2 1219.8,767.5 C1221.9,767.8 1229.6,774.6 1231.7,781.0 C1233.8,787.4 1239.3,826.9 1240.6,831.4 C1241.9,835.9 1243.5,835.3 1245.0,825.5 C1246.5,815.7 1253.9,749.3 1255.5,733.3 C1257.1,717.2 1259.9,679.7 1261.4,665.0 C1262.9,650.3 1269.0,605.2 1270.3,586.0 C1271.6,566.8 1273.3,491.1 1274.8,473.0 C1276.3,454.9 1283.4,418.0 1285.2,404.6 C1287.0,391.2 1291.4,346.3 1292.6,339.0 C1293.8,331.7 1296.0,333.7 1297.0,331.8 C1298.0,329.9 1301.2,318.4 1302.5,320.0 C1303.8,321.6 1309.2,341.0 1310.5,348.0 C1311.8,355.0 1314.0,385.2 1315.0,390.0 C1316.0,394.8 1319.8,391.9 1321.0,395.7 C1322.2,399.5 1325.8,417.7 1327.0,428.4 C1328.2,439.1 1331.3,486.7 1332.8,502.8 C1334.3,518.9 1339.9,574.3 1341.7,589.0 C1343.5,603.7 1349.1,641.2 1350.6,650.0 C1352.1,658.8 1353.6,669.7 1356.6,676.8 C1359.6,683.9 1376.8,715.2 1380.4,721.4 C1384.0,727.6 1390.3,737.2 1392.3,739.0 C1394.3,740.8 1397.9,736.6 1400.0,739.0 C1402.1,741.4 1411.5,758.8 1413.4,763.0 C1415.3,767.2 1417.8,779.0 1419.3,780.9 C1420.8,782.8 1426.4,779.9 1428.3,782.3 C1430.2,784.7 1436.8,808.0 1438.7,804.6 C1440.6,801.2 1446.1,763.5 1447.6,748.0 C1449.1,732.5 1452.2,665.6 1453.5,650.0 C1454.8,634.4 1459.8,610.3 1461.0,592.0 C1462.2,573.7 1464.2,483.9 1465.4,467.0 C1466.6,450.1 1471.7,432.6 1472.9,422.5 C1474.1,412.4 1476.3,372.7 1477.3,366.0 C1478.3,359.3 1482.1,360.1 1483.3,355.6 C1484.5,351.1 1488.1,325.7 1489.2,321.4 C1490.3,317.1 1493.4,311.0 1494.6,312.5 C1495.8,314.0 1499.5,332.8 1501.0,336.0 C1502.5,339.2 1508.2,340.2 1510.0,345.0 C1511.8,349.8 1517.5,374.2 1519.0,384.0 C1520.5,393.8 1523.5,426.7 1525.0,443.0 C1526.5,459.3 1531.7,526.7 1533.8,547.4 C1535.9,568.1 1543.0,631.4 1545.7,650.0 C1548.4,668.6 1557.3,719.6 1560.6,733.3 C1563.9,747.0 1575.1,775.8 1578.4,786.8 C1581.7,797.8 1590.9,836.5 1593.3,843.3 C1595.7,850.1 1600.4,853.2 1602.2,855.0 C1604.0,856.8 1608.8,858.5 1611.2,861.0 C1613.6,863.5 1623.3,885.0 1626.0,880.5 C1628.7,876.0 1635.9,834.8 1638.0,816.5 C1640.1,798.2 1645.3,714.2 1646.8,697.6 C1648.3,681.0 1651.6,664.4 1652.8,650.0 C1654.0,635.6 1657.4,557.9 1658.7,553.3 C1660.0,548.7 1664.4,606.7 1666.2,604.0 C1668.0,601.3 1675.0,537.3 1676.6,526.6 C1678.2,515.9 1681.5,513.4 1682.5,497.0 C1683.5,480.6 1686.0,368.4 1687.0,363.0 C1688.0,357.6 1691.7,440.0 1692.9,443.0 C1694.1,446.0 1697.7,391.3 1698.9,392.8 C1700.1,394.3 1703.5,445.5 1704.8,458.0 C1706.1,470.5 1710.8,508.7 1712.3,517.6 C1713.8,526.5 1718.6,534.2 1720.0,547.4 C1721.4,560.6 1723.9,631.4 1726.0,650.0 C1728.1,668.6 1737.5,718.4 1740.8,733.3 C1744.1,748.2 1756.0,788.6 1758.7,798.7 C1761.4,808.8 1765.5,829.0 1767.6,834.4 C1769.7,839.8 1777.4,848.3 1779.5,852.2 C1781.6,856.1 1786.6,872.7 1788.4,873.0 C1790.2,873.3 1794.0,857.9 1797.3,855.2 C1800.6,852.5 1816.9,852.5 1821.1,846.3 C1825.3,840.0 1836.3,812.3 1839.0,792.7 C1841.7,773.1 1845.8,674.5 1847.9,650.0 C1850.0,625.5 1857.7,564.2 1859.8,547.4 C1861.9,530.6 1867.4,493.3 1868.7,482.0 C1870.0,470.7 1872.3,440.0 1873.2,434.4 C1874.1,428.8 1876.7,425.5 1877.6,425.5 C1878.5,425.5 1881.1,427.6 1882.0,434.4 C1882.9,441.2 1885.0,484.1 1886.5,493.9 C1888.0,503.7 1894.9,516.9 1897.0,532.5 C1899.1,548.1 1904.9,627.9 1907.4,650.0 C1909.9,672.1 1918.9,735.3 1922.2,754.0 C1925.5,772.7 1937.8,830.2 1940.0,837.4 C1942.2,844.5 1942.7,822.8 1944.5,825.5 C1946.3,828.2 1955.2,857.5 1958.0,864.0 C1960.8,870.5 1970.4,887.7 1972.8,891.0 C1975.2,894.3 1980.2,894.1 1981.7,896.8 C1983.2,899.5 1985.5,913.4 1987.7,917.7 C1989.9,922.0 2001.6,941.5 2004.0,940.0 C2006.4,938.5 2010.2,909.5 2011.9,902.8 C2013.6,896.1 2019.3,882.2 2020.8,873.0 C2022.3,863.8 2025.9,825.2 2026.8,810.6 C2027.7,796.0 2028.8,736.8 2029.7,727.3 C2030.6,717.8 2034.7,723.1 2035.7,715.4 C2036.7,707.7 2039.3,663.8 2040.0,650.0 C2040.7,636.2 2042.2,588.5 2043.0,577.0 C2043.8,565.5 2046.4,545.6 2047.6,535.5 C2048.8,525.4 2053.8,482.7 2055.0,476.0 C2056.2,469.3 2058.6,465.9 2059.5,468.6 C2060.4,471.3 2062.7,496.4 2064.0,502.8 C2065.3,509.2 2071.6,525.7 2072.9,532.5 C2074.2,539.3 2076.0,563.2 2077.3,571.2 C2078.6,579.2 2084.7,604.9 2086.2,612.8 C2087.7,620.7 2090.7,640.9 2092.2,650.0 C2093.7,659.1 2098.9,687.4 2101.1,703.5 C2103.3,719.6 2112.1,796.9 2114.5,810.6 C2116.9,824.3 2121.9,835.6 2125.0,840.3 C2128.1,845.0 2142.1,852.9 2145.7,858.0 C2149.3,863.1 2157.9,890.6 2160.6,890.9 C2163.3,891.2 2170.1,864.0 2172.5,861.0 C2174.9,858.0 2182.3,861.6 2184.4,861.0 C2186.5,860.4 2190.9,856.4 2193.3,855.2 C2195.7,854.0 2205.5,852.6 2208.2,849.3 C2210.9,846.0 2218.2,830.5 2220.0,822.5 C2221.8,814.5 2224.9,786.2 2226.0,769.0 C2227.1,751.8 2229.2,669.8 2230.5,650.0 C2231.8,630.2 2238.5,579.1 2239.4,571.2" fill="none" stroke="#4b8fe2" stroke-width="3" stroke-linejoin="round" stroke-linecap="round"/></svg>
<div style="position:absolute;left:1013px;top:1143.5px;width:34px;height:3.0px;background:#4b8fe2;"></div>
<div style="position:absolute;left:1053px;top:1122.9px;height:46.2px;line-height:46.2px;font-size:23.1px;font-weight:400;color:#b0b0b0;white-space:nowrap;">Row 10 - Canopy Temperature</div>
<div style="position:absolute;left:1400px;top:1143.5px;width:34px;height:3.0px;background:#e8964c;"></div>
<div style="position:absolute;left:1440px;top:1122.9px;height:46.2px;line-height:46.2px;font-size:23.1px;font-weight:400;color:#b0b0b0;white-space:nowrap;">Row 40 - Canopy Temperature</div>
<div style="position:absolute;left:1787px;top:1143.5px;width:34px;height:3.0px;background:#5fae3a;"></div>
<div style="position:absolute;left:1827px;top:1122.9px;height:46.2px;line-height:46.2px;font-size:23.1px;font-weight:400;color:#b0b0b0;white-space:nowrap;">Row 10 - Vapor Pressure Deficit</div>
<div style="position:absolute;left:1013px;top:1204.5px;width:34px;height:3.0px;background:#c9443a;"></div>
<div style="position:absolute;left:1053px;top:1183.9px;height:46.2px;line-height:46.2px;font-size:23.1px;font-weight:400;color:#b0b0b0;white-space:nowrap;">Row 40 - Vapor Pressure Deficit</div>
<div style="position:absolute;left:975px;top:1261.8px;height:58.4px;line-height:58.4px;font-size:29.2px;font-weight:400;color:#8a8d90;white-space:nowrap;">Times are in US Pacific</div>
<div style="position:absolute;left:1798px;top:1258px;width:256px;height:60px;box-sizing:border-box;border:2px solid #3b8fdc;border-radius:30px;"></div>
<div style="position:absolute;left:1176px;width:1500px;text-align:center;top:1263.5px;height:52px;line-height:52px;font-size:26px;font-weight:700;color:#4aa2f2;white-space:nowrap;">Download PNG</div>
<div style="position:absolute;left:2084px;top:1258px;width:253px;height:60px;box-sizing:border-box;border:2px solid #2a6aa6;border-radius:30px;"></div>
<div style="position:absolute;left:1460.5px;width:1500px;text-align:center;top:1263.5px;height:52px;line-height:52px;font-size:26px;font-weight:700;color:#4688c6;white-space:nowrap;">Download CSV</div>
</body></html>
